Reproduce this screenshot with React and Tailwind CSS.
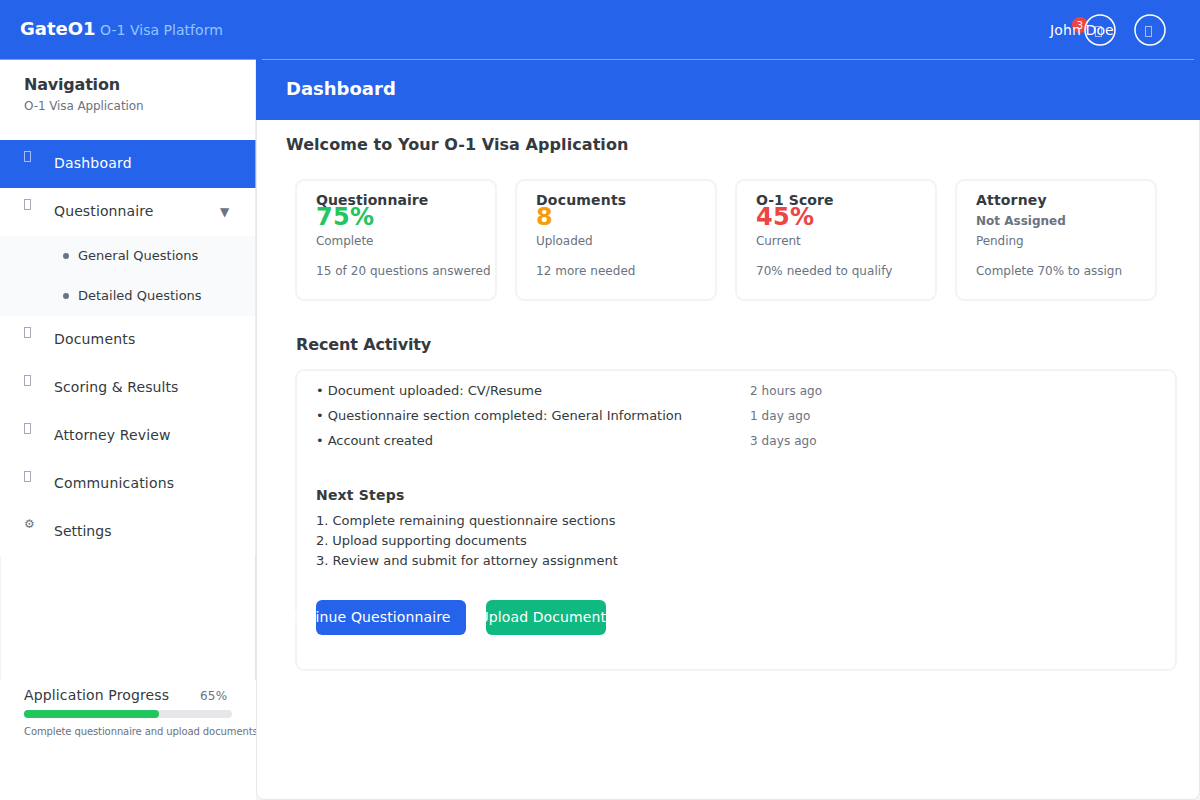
import React from "react";

const cards = [
  { title: "Questionnaire", value: "75%", color: "text-[#22c55e]", label: "Complete", note: "15 of 20 questions answered", track: "tracking-[0.08px]", noteTrack: "tracking-[0.04px]" },
  { title: "Documents", value: "8", color: "text-[#f59e0b]", label: "Uploaded", note: "12 more needed", track: "tracking-[0.2px]", noteTrack: "tracking-[0.04px]" },
  { title: "O-1 Score", value: "45%", color: "text-[#ef4444]", label: "Current", note: "70% needed to qualify", track: "tracking-[0.05px]", noteTrack: "tracking-[0.04px]" },
  { title: "Attorney", value: "Not Assigned", color: "", label: "Pending", note: "Complete 70% to assign", track: "tracking-[0.18px]", noteTrack: "tracking-[-0.02px]" },
];

const activity = [
  ["Document uploaded: CV/Resume", "2 hours ago", "tracking-[-0.03px]"],
  ["Questionnaire section completed: General Information", "1 day ago", ""],
  ["Account created", "3 days ago", "tracking-[-0.06px]"],
];

const steps = [
  ["Complete remaining questionnaire sections", "tracking-[-0.01px]"],
  ["Upload supporting documents", "tracking-[-0.07px]"],
  ["Review and submit for attorney assignment", "tracking-[0.01px]"],
];

function Glyph({ className }) {
  return <span className={`block h-[11px] w-[7px] border ${className}`} />;
}

function NavItem({ icon, label, active, expandable, track = "" }) {
  return (
    <div className={`flex h-12 items-start border-r pl-6 ${active ? "border-[#8fadf0] bg-[#2563eb] text-white" : "border-[#ededed] text-[#343a40]"}`}>
      <span className={`w-[30px] text-[12px] leading-[14px] text-[#6b7280] ${icon ? "pt-[9px]" : "pt-[11px]"}`}>
        {icon || <Glyph className={active ? "border-[#a9bdf4]" : "border-[#a6a9b4]"} />}
      </span>
      <span className={`w-[166px] pt-[15px] text-[14px] leading-[16px] ${track}`}>{label}</span>
      {expandable && <span className="pt-[17px] text-[12px] leading-[14px] text-[#6b7280]">▼</span>}
    </div>
  );
}

function SubItem({ label }) {
  return (
    <div className="flex h-10 items-start border-r border-[#ededed] bg-[#f9fafb] pl-[63px] text-[#343a40]">
      <span className="mt-[17px] mr-[9px] size-1.5 rounded-full bg-[#6b7280]" />
      <span className="pt-3 text-[13px] leading-[15px]">{label}</span>
    </div>
  );
}

function StatCard({ title, value, color, label, note, track, noteTrack }) {
  return (
    <div className="h-[122px] w-[202px] rounded-[9px] border-2 border-[#f0f4f8] pt-[11px] pl-[19px] whitespace-nowrap text-[#6b7280]">
      <div className={`text-[14px] leading-[16px] font-bold text-[#343a40] ${track}`}>{title}</div>
      {color ? (
        <div className={`-mt-[5px] mb-[3px] text-[24px] leading-[28px] font-bold tracking-[0.3px] ${color}`}>{value}</div>
      ) : (
        <div className="my-1.5 text-[12px] leading-[14px] font-bold">{value}</div>
      )}
      <div className="text-[12px] leading-[14px] tracking-[-0.06px]">{label}</div>
      <div className={`mt-4 text-[12px] leading-[14px] ${noteTrack}`}>{note}</div>
    </div>
  );
}

function RoundButton({ className }) {
  return (
    <span className={`absolute top-3.5 size-8 pt-3 pl-[11px] ${className}`}>
      <svg className="absolute inset-0" width="32" height="32" viewBox="0 0 32 32" fill="none">
        <circle cx="16" cy="16" r="15" stroke="white" strokeWidth="1.5" />
      </svg>
      <Glyph className="border-[#a9bdf4]" />
    </span>
  );
}

export default function App() {
  return (
    <div className="flex h-[800px] w-[1200px] flex-col overflow-hidden bg-white font-['DejaVu_Sans',sans-serif]">
      <header className="flex h-[60px] shrink-0 flex-col bg-[#2563eb]">
        <div className="relative flex h-[59px] items-baseline pt-[18px] pl-5">
          <span className="w-20 text-[18px] leading-[21px] font-bold text-white">GateO1</span>
          <span className="text-[14px] leading-[16px] tracking-[0.03px] text-[#93c5fd]">O-1 Visa Platform</span>
          <span className="absolute top-[17px] left-[1072px] flex size-4 justify-center rounded-full bg-[#ef4444] pt-[3px] text-[10px] leading-[11px] text-white">3</span>
          <RoundButton className="left-[1084px]" />
          <RoundButton className="left-[1134px]" />
          <span className="absolute top-[22px] left-[1050px] text-[14px] leading-[16px] tracking-[0.12px] whitespace-nowrap text-white">John Doe</span>
        </div>
        <div className="flex h-px gap-1.5 pr-1.5">
          <div className="w-64 bg-[#7ca1f3]" />
          <div className="flex-1 bg-[#7ca1f3]" />
        </div>
      </header>

      <div className="flex flex-1">
        <aside className="flex w-64 shrink-0 flex-col">
          <div className="h-20 border-r border-[#ededed] pt-[15px] pl-6">
            <h2 className="text-[16px] leading-[19px] font-bold tracking-[-0.2px] text-[#343a40]">Navigation</h2>
            <p className="mt-[5px] text-[12px] leading-[14px] tracking-[-0.09px] text-[#6b7280]">O-1 Visa Application</p>
          </div>
          <nav>
            <NavItem label="Dashboard" active track="tracking-[0.2px]" />
            <NavItem label="Questionnaire" expandable track="tracking-[0.12px]" />
            <SubItem label="General Questions" />
            <SubItem label="Detailed Questions" />
            <NavItem label="Documents" track="tracking-[0.17px]" />
            <NavItem label="Scoring & Results" track="tracking-[0.09px]" />
            <NavItem label="Attorney Review" track="tracking-[0.13px]" />
            <NavItem label="Communications" track="tracking-[0.18px]" />
            <NavItem icon="⚙" label="Settings" />
          </nav>
          <div className="h-[124px] border-r border-l border-r-[#e5e5e5] border-l-[#f0f4f8]" />
          <div className="flex-1 pt-[7px] pl-6">
            <div className="flex items-baseline">
              <span className="w-44 text-[14px] leading-[16px] tracking-[0.14px] text-[#343a40]">Application Progress</span>
              <span className="text-[12px] leading-[14px] tracking-[0.2px] text-[#6b7280]">65%</span>
            </div>
            <div className="mt-[7px] h-2 w-[208px] rounded-full bg-[#e5e7eb]">
              <div className="h-2 w-[135px] rounded-full bg-[#22c55e]" />
            </div>
            <p className="mt-2 text-[10px] leading-[11px] tracking-[-0.1px] whitespace-nowrap text-[#6b7280]">Complete questionnaire and upload documents</p>
          </div>
        </aside>

        <main className="flex flex-1 flex-col bg-[#f5f5f5]">
          <div className="h-[60px] bg-[#2563eb] pt-[18px] pl-[30px]">
            <h1 className="text-[18px] leading-[21px] font-bold text-white">Dashboard</h1>
          </div>
          <div className="flex-1 rounded-b-lg border border-t-0 border-[#e8e8e8] bg-white pt-[15px] pl-[29px]">
            <h2 className="text-[16px] leading-[19px] font-bold tracking-[0.07px] text-[#343a40]">Welcome to Your O-1 Visa Application</h2>
            <div className="pl-[9px]">
              <div className="mt-[25px] flex gap-[18px]">
                {cards.map((c) => (
                  <StatCard key={c.title} {...c} />
                ))}
              </div>
              <h2 className="mt-[34px] pl-px text-[16px] leading-[19px] font-bold tracking-[-0.13px] text-[#343a40]">Recent Activity</h2>
              <div className="mt-[15px] h-[302px] w-[882px] rounded-[9px] border-2 border-[#f0f4f8] pt-3 pl-[19px] text-[#343a40]">
                <ul className="flex flex-col gap-2.5 text-[13px] leading-[15px]">
                  {activity.map(([text, time, track]) => (
                    <li key={text} className="flex h-[15px] items-baseline">
                      <span className={`w-[434px] ${track}`}>• {text}</span>
                      <span className="text-[12px] leading-[14px] tracking-[0.08px] text-[#6b7280]">{time}</span>
                    </li>
                  ))}
                </ul>
                <h3 className="mt-[39px] text-[14px] leading-[16px] font-bold tracking-[0.2px] text-[#343a40]">Next Steps</h3>
                <ol className="mt-2.5 flex flex-col gap-[5px] text-[13px] leading-[15px]">
                  {steps.map(([s, track], i) => (
                    <li key={s} className={track}>{i + 1}. {s}</li>
                  ))}
                </ol>
                <div className="mt-8 flex gap-5 text-[14px] leading-[16px] tracking-[0.12px] whitespace-nowrap text-white">
                  <button className="flex h-[35px] w-[150px] justify-end rounded-md bg-[#2563eb] pt-[9px] pr-[15.5px]">Continue Questionnaire</button>
                  <button className="flex h-[35px] w-[120px] justify-center rounded-md bg-[#10b981] pt-[9px]">Upload Documents</button>
                </div>
              </div>
            </div>
          </div>
        </main>
      </div>
    </div>
  );
}
